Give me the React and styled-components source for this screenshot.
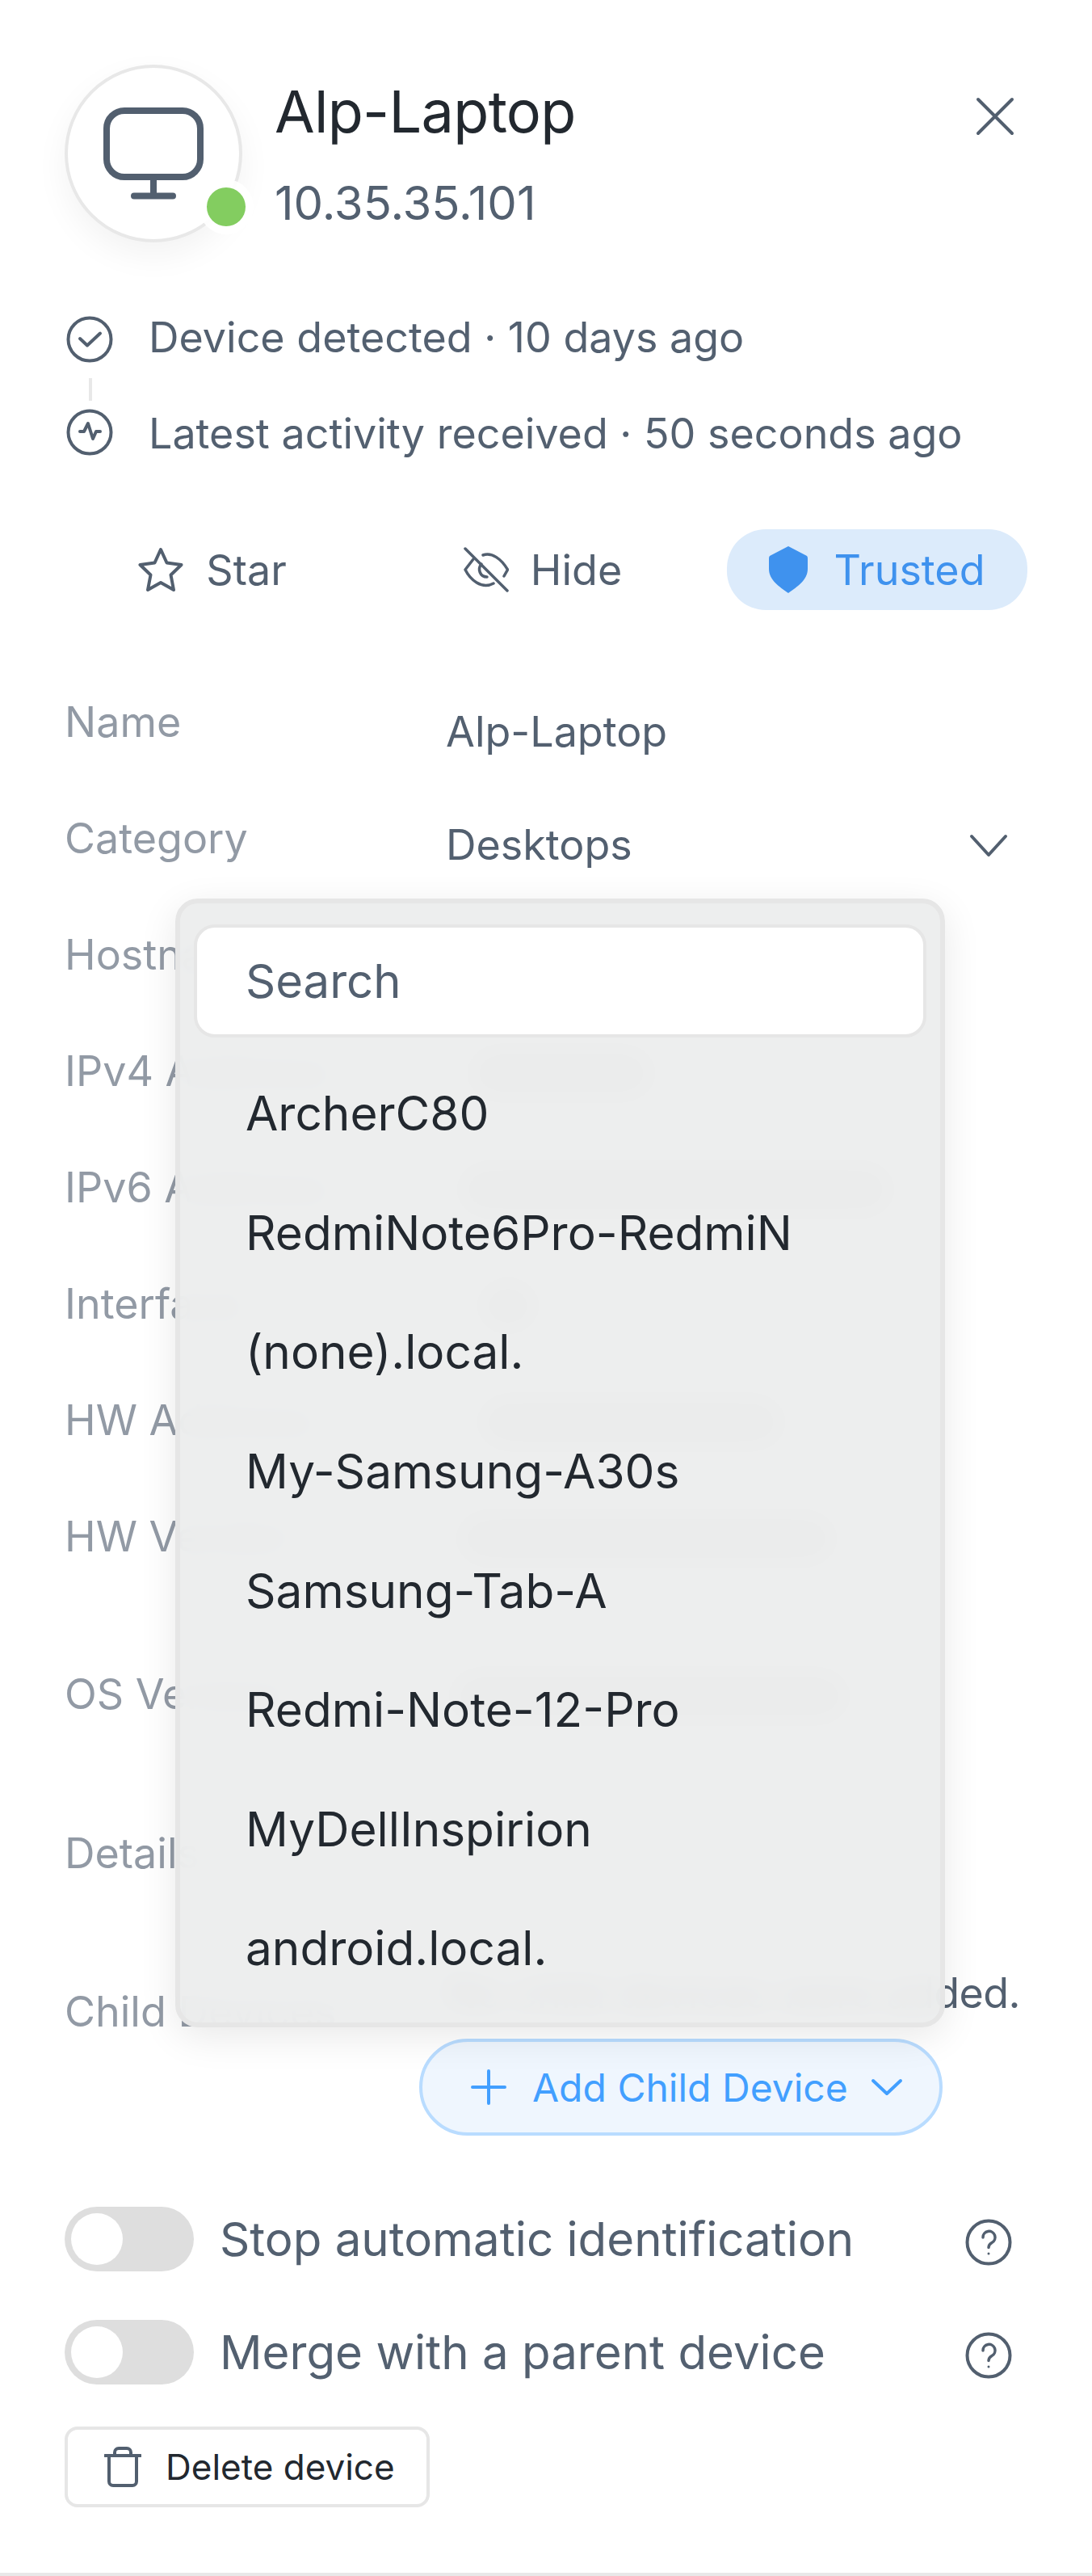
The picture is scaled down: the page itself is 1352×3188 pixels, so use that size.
import React from 'react';
import styled, { createGlobalStyle } from 'styled-components';

const GlobalStyle = createGlobalStyle`
  * {
    box-sizing: border-box;
  }
  body {
    margin: 0;
    background: #fff;
    font-family: Inter, "Liberation Sans", sans-serif;
  }
`;

const hostnames = [
  'ArcherC80',
  'RedmiNote6Pro-RedmiN',
  '(none).local.',
  'My-Samsung-A30s',
  'Samsung-Tab-A',
  'Redmi-Note-12-Pro',
  'MyDellInspirion',
  'android.local.',
];

// hidden behind the frosted popup, only show up as smudges
const hiddenRows = [
  { label: 'Hostname', height: 144 },
  { label: 'IPv4 Address', height: 144, blob: [30, 226] },
  { label: 'IPv6 Address', height: 144, blob: [17, 535] },
  { label: 'Interface', height: 144, blob: [42, 70] },
  { label: 'HW Address', height: 144, blob: [42, 375] },
  { label: 'HW Vendor', height: 195, blob: [16, 465] },
  { label: 'OS Version', height: 197, blob: [7, 490] },
  { label: 'Details', height: 196 },
];

const MonitorIcon = () => (
  <svg width="124" height="114" viewBox="0 0 124 114" fill="none" stroke="#525f6f" strokeWidth="8" strokeLinecap="round">
    <rect x="4" y="4" width="116" height="82" rx="22" />
    <path d="M62 88V109M38 109.500H86" />
  </svg>
);

const CloseIcon = () => (
  <svg width="48" height="48" viewBox="0 0 48 48" fill="none" stroke="#525f6f" strokeWidth="4" strokeLinecap="round">
    <path d="M3 3L45 45M45 3L3 45" />
  </svg>
);

const CheckCircleIcon = () => (
  <svg width="58" height="58" viewBox="0 0 58 58" fill="none" stroke="#525f6f" strokeWidth="4" strokeLinecap="round" strokeLinejoin="round">
    <circle cx="29" cy="29" r="26.500" />
    <path d="M17 28L26 36.500L42 21.500" />
  </svg>
);

const PulseCircleIcon = () => (
  <svg width="58" height="58" viewBox="0 0 58 58" fill="none" stroke="#525f6f" strokeWidth="4" strokeLinecap="round" strokeLinejoin="round">
    <circle cx="29" cy="29" r="26.500" />
    <path d="M17 28H22L27 18L33 37L37 28H42" />
  </svg>
);

const StarIcon = () => (
  <svg width="56" height="56" viewBox="0 0 56 56" fill="none" stroke="#525f6f" strokeWidth="4" strokeLinejoin="round">
    <path d="M28 3L35.500 19.500L53.500 22L40.500 34.500L44 53L28 44L12 53L15.500 34.500L2.500 22L20.500 19.500Z" />
  </svg>
);

const EyeOffIcon = () => (
  <svg width="56" height="56" viewBox="0 0 56 56" fill="none" stroke="#525f6f" strokeWidth="3.500" strokeLinecap="round" strokeLinejoin="round">
    <path d="M2 2L54 54" />
    <path d="M24 10C35 6 47 15 54.500 28L50 36" />
    <path d="M12 15L2 28C8 40 22 53 37 45" />
    <path d="M22 21C17 27 20 37 29 37" />
  </svg>
);

const ShieldIcon = () => (
  <svg width="48" height="58" viewBox="0 0 48 58" fill="#3f92ee">
    <path d="M24 0L47 12Q48 13 48 15V28C48 42 35 50 24 58C13 50 0 42 0 28V15Q0 13 1 12Z" />
  </svg>
);

const ChevronIcon = () => (
  <svg width="48" height="29" viewBox="0 0 48 29" fill="none" stroke="#525f6f" strokeWidth="4" strokeLinecap="round" strokeLinejoin="round">
    <path d="M3 3L24 26L45 3" />
  </svg>
);

const SmallChevronIcon = () => (
  <svg width="40" height="22" viewBox="0 0 40 22" fill="none" stroke="#429fff" strokeWidth="4" strokeLinecap="round" strokeLinejoin="round">
    <path d="M3 3L20 19L37 3" />
  </svg>
);

const PlusIcon = () => (
  <svg width="44" height="44" viewBox="0 0 44 44" fill="none" stroke="#429fff" strokeWidth="4" strokeLinecap="round">
    <path d="M22 2V42M2 22H42" />
  </svg>
);

const HelpIcon = () => (
  <svg width="58" height="58" viewBox="0 0 58 58" fill="none" stroke="#525f6f" strokeWidth="4" strokeLinecap="round">
    <circle cx="29" cy="29" r="26.500" />
    <path d="M22 23A7.500 7.500 0 1 1 33 29.500C30 31.200 29 32.500 29 35.500" strokeWidth="3.500" />
    <circle cx="29" cy="43" r="1.500" fill="#525f6f" stroke="none" />
  </svg>
);

const TrashIcon = () => (
  <svg width="46" height="50" viewBox="0 0 46 50" fill="none" stroke="#525f6f" strokeWidth="4" strokeLinecap="round" strokeLinejoin="round">
    <path d="M1 11H45" />
    <path d="M13 11V7A5 5 0 0 1 18 2H28A5 5 0 0 1 33 7V11" />
    <path d="M6 11V43A5 5 0 0 0 11 48H35A5 5 0 0 0 40 43V11" />
  </svg>
);

const App = () => (
  <>
    <GlobalStyle />
    <Panel>
      <Header>
        <Avatar>
          <MonitorIcon />
          <StatusDot />
        </Avatar>
        <Identity>
          <Title>Alp-Laptop</Title>
          <Address>10.35.35.101</Address>
        </Identity>
        <CloseButton>
          <CloseIcon />
        </CloseButton>
      </Header>

      <Timeline>
        <TimelineRow>
          <CheckCircleIcon />
          <TimelineText $shift={-5}>Device detected · 10 days ago</TimelineText>
        </TimelineRow>
        <Connector />
        <TimelineRow>
          <PulseCircleIcon />
          <TimelineText $shift={4}>Latest activity received · 50 seconds ago</TimelineText>
        </TimelineRow>
      </Timeline>

      <Actions>
        <ActionButton $gap={28} $pad={2}>
          <StarIcon />
          Star
        </ActionButton>
        <ActionButton $gap={27} $pad={4}>
          <EyeOffIcon />
          Hide
        </ActionButton>
        <ActionButton $active $gap={32}>
          <ShieldIcon />
          Trusted
        </ActionButton>
      </Actions>

      <Details>
        <Row $height={144}>
          <Label>Name</Label>
          <Value $top={14}>Alp-Laptop</Value>
        </Row>
        <Row $height={144}>
          <Label>Category</Label>
          <SelectValue>
            Desktops
            <ChevronIcon />
          </SelectValue>
        </Row>
        {hiddenRows.map((row) => (
          <Row key={row.label} $height={row.height}>
            <Label>{row.label}</Label>
            {row.blob && <Smudge style={{ marginLeft: row.blob[0], width: row.blob[1] }} />}
          </Row>
        ))}
        <Row $height={187}>
          <Label>Child Devices</Label>
          <ChildColumn>
            <ChildNote>No child devices were added.</ChildNote>
            <AddButton>
              <PlusIcon />
              Add Child Device
              <SmallChevronIcon />
            </AddButton>
          </ChildColumn>
        </Row>

        <Popup>
          <SearchInput placeholder="Search" readOnly />
          {hostnames.map((name) => (
            <PopupItem key={name}>{name}</PopupItem>
          ))}
        </Popup>
      </Details>

      <Toggles>
        <ToggleRow>
          <Toggle />
          <ToggleLabel>Stop automatic identification</ToggleLabel>
          <HelpIcon />
        </ToggleRow>
        <ToggleRow>
          <Toggle />
          <ToggleLabel>Merge with a parent device</ToggleLabel>
          <HelpIcon />
        </ToggleRow>
      </Toggles>

      <DeleteButton>
        <TrashIcon />
        Delete device
      </DeleteButton>
    </Panel>
  </>
);

export default App;

const Panel = styled.div`
  width: 1352px;
  height: 3188px;
  padding: 80px 80px 0;
  background: #fff;
  border-bottom: 4px solid #e8e8e8;
  overflow: hidden;
`;

const Header = styled.div`
  display: flex;
  gap: 40px;
  height: 220px;
`;

const Avatar = styled.div`
  position: relative;
  flex: none;
  display: flex;
  align-items: center;
  justify-content: center;
  width: 220px;
  height: 220px;
  border: 4px solid #e8e8e8;
  border-radius: 50%;
  background: #fff;
  box-shadow: 0 16px 40px rgba(0, 0, 0, 0.05);
`;

const StatusDot = styled.span`
  position: absolute;
  left: 172px;
  top: 148px;
  width: 48px;
  height: 48px;
  border-radius: 50%;
  background: #83cd60;
  box-shadow: 0 0 0 10px rgba(255, 255, 255, 0.88);
`;

const Identity = styled.div`
  display: flex;
  flex-direction: column;
  flex: 1;
  padding-top: 14px;
  gap: 33px;
`;

const Title = styled.div`
  font-size: 72px;
  line-height: 88px;
  letter-spacing: -0.7px;
  color: #22282f;
`;

const Address = styled.div`
  font-size: 58px;
  line-height: 72px;
  color: #536070;
`;

const CloseButton = styled.div`
  flex: none;
  margin: 40px 16px 0 0;
  height: 48px;
`;

const Timeline = styled.div`
  margin-top: 91px;
  padding-left: 2px;
`;

const TimelineRow = styled.div`
  display: flex;
  align-items: center;
  gap: 44px;
  height: 58px;
`;

const TimelineText = styled.span`
  font-size: 52px;
  line-height: 64px;
  color: #536070;
  margin-top: ${(p) => p.$shift}px;
`;

const Connector = styled.div`
  width: 4px;
  height: 28px;
  margin: 19px 0 10px 28px;
  background: #e8e8e8;
`;

const Actions = styled.div`
  display: grid;
  grid-template-columns: 368px 1fr 372px;
  margin-top: 91px;
`;

const ActionButton = styled.div`
  display: flex;
  align-items: center;
  justify-content: center;
  gap: ${(p) => p.$gap}px;
  height: 100px;
  padding-right: ${(p) => p.$pad || 0}px;
  border-radius: 48px;
  font-size: 52px;
  color: ${(p) => (p.$active ? '#3f92ee' : '#536070')};
  background: ${(p) => (p.$active ? '#dcebfb' : 'transparent')};
`;

const Details = styled.div`
  position: relative;
  margin-top: 105px;
`;

const Row = styled.div`
  display: grid;
  grid-template-columns: 472px 1fr;
  align-items: start;
  height: ${(p) => p.$height}px;
`;

const Label = styled.div`
  margin-top: 2px;
  font-size: 52px;
  line-height: 64px;
  color: #929aa5;
  white-space: nowrap;
`;

const Value = styled.div`
  font-size: 52px;
  line-height: 64px;
  color: #536070;
  white-space: nowrap;
  margin-top: ${(p) => p.$top || 0}px;
`;

const SelectValue = styled(Value)`
  display: flex;
  align-items: center;
  justify-content: space-between;
  margin-top: 10px;
  padding-right: 24px;
`;

const ChildNote = styled(Value)`
  margin-top: -21px;
  letter-spacing: -0.6px;
`;

const Smudge = styled.div`
  height: 60px;
  margin-top: 6px;
  border-radius: 30px;
  background: #cfcfcf;
`;

const ChildColumn = styled.div`
  display: flex;
  flex-direction: column;
  align-items: flex-start;
`;

const AddButton = styled.div`
  display: flex;
  align-items: center;
  gap: 32px;
  width: 648px;
  height: 120px;
  margin: 24px 0 0 -33px;
  padding-left: 60px;
  border: 4px solid #b9dcff;
  border-radius: 60px;
  background: #eff6fe;
  font-size: 48px;
  color: #429fff;
  svg:last-child {
    margin-left: -4px;
  }
`;

const Popup = styled.div`
  position: absolute;
  left: 137px;
  top: 252px;
  width: 953px;
  height: 1397px;
  padding: 24px 17px 0;
  overflow: hidden;
  border: 6px solid #e6e6e6;
  border-radius: 28px;
  background: rgba(236, 237, 237, 0.94);
  backdrop-filter: blur(16px);
  box-shadow: 0 12px 48px rgba(0, 0, 0, 0.09);
`;

const SearchInput = styled.input`
  display: block;
  width: 100%;
  height: 140px;
  margin-top: 2px;
  margin-bottom: 20px;
  padding: 0 60px;
  border: 4px solid #e6e6e6;
  border-radius: 26px;
  outline: none;
  background: #fff;
  font-family: inherit;
  font-size: 58px;
  color: #536070;
  &::placeholder {
    color: #536070;
    opacity: 1;
  }
`;

const PopupItem = styled.div`
  display: flex;
  align-items: center;
  height: 147.6px;
  padding-left: 64px;
  font-size: 58.5px;
  color: #22282f;
  white-space: nowrap;
`;

const Toggles = styled.div`
  display: flex;
  flex-direction: column;
  gap: 60px;
  margin-top: 88px;
`;

const ToggleRow = styled.div`
  display: flex;
  align-items: center;
  height: 80px;
  padding-right: 19px;
  svg {
    flex: none;
    margin-top: 8px;
  }
`;

const Toggle = styled.div`
  flex: none;
  width: 160px;
  height: 80px;
  padding: 8px;
  border-radius: 40px;
  background: #dedede;
  &::before {
    content: '';
    display: block;
    width: 64px;
    height: 64px;
    border-radius: 50%;
    background: #fff;
  }
`;

const ToggleLabel = styled.div`
  flex: 1;
  margin-left: 32px;
  font-size: 58.2px;
  color: #536070;
  white-space: nowrap;
`;

const DeleteButton = styled.div`
  display: flex;
  align-items: center;
  gap: 30px;
  width: 452px;
  height: 100px;
  margin-top: 52px;
  padding-left: 45px;
  border: 4px solid #e6e6e6;
  border-radius: 16px;
  font-size: 44px;
  color: #22282f;
`;
